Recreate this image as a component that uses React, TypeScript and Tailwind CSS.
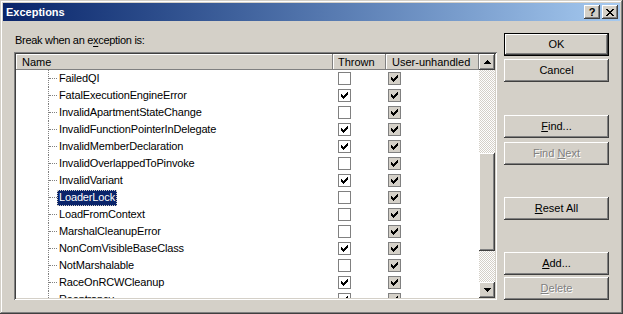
import type { ReactNode } from "react";

type Row = { name: string; thrown: boolean; unhandled: boolean };

const rows: Row[] = [
	{ name: "FailedQI", thrown: false, unhandled: true },
	{ name: "FatalExecutionEngineError", thrown: true, unhandled: true },
	{ name: "InvalidApartmentStateChange", thrown: false, unhandled: true },
	{ name: "InvalidFunctionPointerInDelegate", thrown: true, unhandled: true },
	{ name: "InvalidMemberDeclaration", thrown: true, unhandled: true },
	{ name: "InvalidOverlappedToPinvoke", thrown: false, unhandled: true },
	{ name: "InvalidVariant", thrown: true, unhandled: true },
	{ name: "LoaderLock", thrown: false, unhandled: true },
	{ name: "LoadFromContext", thrown: false, unhandled: true },
	{ name: "MarshalCleanupError", thrown: false, unhandled: true },
	{ name: "NonComVisibleBaseClass", thrown: true, unhandled: true },
	{ name: "NotMarshalable", thrown: false, unhandled: true },
	{ name: "RaceOnRCWCleanup", thrown: true, unhandled: true },
	{ name: "Reentrancy", thrown: true, unhandled: true },
];

const raised =
	"shadow-[inset_-1px_-1px_#404040,inset_1px_1px_#ffffff,inset_-2px_-2px_#808080,inset_2px_2px_#d4d0c8]";

function Check() {
	// classic 7x7 tick
	const px: [number, number][] = [
		[6, 0], [5, 1], [6, 1], [0, 2], [4, 2], [5, 2], [6, 2],
		[0, 3], [1, 3], [3, 3], [4, 3], [5, 3], [0, 4], [1, 4], [2, 4], [3, 4], [4, 4],
		[1, 5], [2, 5], [3, 5], [2, 6],
	];
	return (
		<svg width="7" height="7" viewBox="0 0 7 7" shapeRendering="crispEdges">
			{px.map(([x, y], i) => (
				<rect key={i} x={x} y={y} width="1" height="1" fill="#000" />
			))}
		</svg>
	);
}

function CheckBox({ checked, gray }: { checked: boolean; gray?: boolean }) {
	return (
		<span
			className={`flex h-[13px] w-[13px] items-center justify-center border border-[#808080] ${
				gray ? "bg-[#d4d0c8]" : "bg-white"
			}`}
		>
			{checked && <Check />}
		</span>
	);
}

function Button({
	children,
	isDefault,
	disabled,
	className = "",
}: {
	children: ReactNode;
	isDefault?: boolean;
	disabled?: boolean;
	className?: string;
}) {
	return (
		<div
			className={`h-[23px] w-[105px] ${isDefault ? "border border-black" : ""} ${className}`}
		>
			<div
				className={`flex h-full w-full items-center justify-center bg-[#d4d0c8] ${raised} ${
					disabled ? "text-[#808080] [text-shadow:1px_1px_#ffffff]" : "text-black"
				}`}
			>
				{children}
			</div>
		</div>
	);
}

function Arrow({ up }: { up?: boolean }) {
	return (
		<svg width="7" height="4" viewBox="0 0 7 4" shapeRendering="crispEdges">
			<path d={up ? "M3 0h1v1h1v1h1v1h1v1H0V3h1V2h1V1h1z" : "M0 0h7v1H6v1H5v1H4v1H3V3H2V2H1V1H0z"} fill="#000" />
		</svg>
	);
}

function HeaderCell({ children, className = "" }: { children: ReactNode; className?: string }) {
	return (
		<div
			className={`flex h-[16px] shrink-0 items-center bg-[#d4d0c8] shadow-[inset_-1px_-1px_#808080,inset_1px_1px_#ffffff] ${className}`}
		>
			{children}
		</div>
	);
}

function ExceptionRow({ row, selected }: { row: Row; selected?: boolean }) {
	return (
		<div className="flex h-[17px] shrink-0">
			<div className="flex w-[317px] shrink-0">
				<span className="w-[32px] shrink-0" />
				<span className="flex w-[9px] shrink-0 items-center border-l border-dotted border-[#808080]">
					<span className="h-0 w-[8px] border-t border-dotted border-[#808080]" />
				</span>
				<span
					className={`flex h-[16px] items-center self-center px-[2px] tracking-[-0.15px] ${
						selected
							? "bg-[#0a246a] text-white outline outline-1 -outline-offset-1 outline-dotted outline-[#d4d0c8]"
							: "text-black"
					}`}
				>
					{row.name}
				</span>
			</div>
			<div className="flex w-[53px] shrink-0 items-center pl-[5px]">
				<CheckBox checked={row.thrown} />
			</div>
			<div className="flex w-[93px] shrink-0 items-center pl-[2px]">
				<CheckBox checked={row.unhandled} gray />
			</div>
		</div>
	);
}

function ScrollBar() {
	return (
		<div className="flex w-[16px] shrink-0 flex-col">
			<div className={`flex h-[16px] shrink-0 items-center justify-center bg-[#d4d0c8] ${raised}`}>
				<Arrow up />
			</div>
			<div className="flex flex-1 flex-col bg-[repeating-conic-gradient(#d4d0c8_0_25%,#ffffff_0_50%)] bg-[length:2px_2px]">
				<div className="h-[83px] shrink-0" />
				<div className={`h-[98px] shrink-0 bg-[#d4d0c8] ${raised}`} />
			</div>
			<div className={`flex h-[16px] shrink-0 items-center justify-center bg-[#d4d0c8] ${raised}`}>
				<Arrow />
			</div>
		</div>
	);
}

export default function App() {
	return (
		<div className="flex h-[314px] w-[623px] flex-col bg-[#d4d0c8] p-[3px] font-['Liberation_Sans',Arial,sans-serif] text-[11px] leading-none text-black shadow-[inset_-1px_-1px_#404040,inset_1px_1px_#d4d0c8,inset_-2px_-2px_#808080,inset_2px_2px_#ffffff]">
			{/* title bar */}
			<div className="flex h-[18px] shrink-0 items-center bg-gradient-to-r from-[#0a246a] to-[#a6caf0] pl-[3px] pr-[2px]">
				<span className="flex-1 text-[11px] font-bold text-white">Exceptions</span>
				<div className={`flex h-[14px] w-[16px] items-center justify-center bg-[#d4d0c8] ${raised} text-[11px] font-bold`}>
					?
				</div>
				<div className={`ml-[2px] flex h-[14px] w-[16px] items-center justify-center bg-[#d4d0c8] ${raised}`}>
					<svg width="8" height="7" viewBox="0 0 8 7" shapeRendering="crispEdges">
						<path d="M0 0h2v1h1v1h2V1h1V0h2v1H7v1H6v1H5v1h1v1h1v1h1v1H6V6H5V5H3v1H2v1H0V6h1V5h1V4h1V3H2V2H1V1H0z" fill="#000" />
					</svg>
				</div>
			</div>

			<div className="flex flex-1">
				{/* left pane */}
				<div className="flex flex-col pl-[11px] pt-[12px]">
					<div className="flex h-[14px] items-center pl-[1px] tracking-[-0.3px]">
						Break when an e<u className="underline-offset-2">x</u>ception is:
					</div>
					<div className="mt-[5px] flex h-[248px] w-[483px] p-[2px] shadow-[inset_1px_1px_#808080,inset_-1px_-1px_#ffffff,inset_2px_2px_#404040,inset_-2px_-2px_#d4d0c8]">
						<div className="flex flex-1 overflow-hidden bg-white">
							<div className="flex flex-1 flex-col overflow-hidden">
								<div className="flex shrink-0">
									<HeaderCell className="w-[317px] pl-[6px]">Name</HeaderCell>
									<HeaderCell className="w-[53px] pl-[5px]">Thrown</HeaderCell>
									<HeaderCell className="w-[93px] pl-[6px]">User-unhandled</HeaderCell>
								</div>
								{rows.map((row) => (
									<ExceptionRow key={row.name} row={row} selected={row.name === "LoaderLock"} />
								))}
							</div>
							<ScrollBar />
						</div>
					</div>
				</div>

				{/* buttons */}
				<div className="ml-[7px] flex flex-col pt-[12px]">
					<Button isDefault>OK</Button>
					<Button className="mt-[3px]">Cancel</Button>
					<Button className="mt-[33px]">
						<span>
							<u>F</u>ind...
						</span>
					</Button>
					<Button className="mt-[4px]" disabled>
						<span>
							Find <u>N</u>ext
						</span>
					</Button>
					<Button className="mt-[32px]">
						<span>
							<u>R</u>eset All
						</span>
					</Button>
					<Button className="mt-[32px]">
						<span>
							<u>A</u>dd...
						</span>
					</Button>
					<Button className="mt-[2px]" disabled>
						<span>
							<u>D</u>elete
						</span>
					</Button>
				</div>
			</div>
		</div>
	);
}
